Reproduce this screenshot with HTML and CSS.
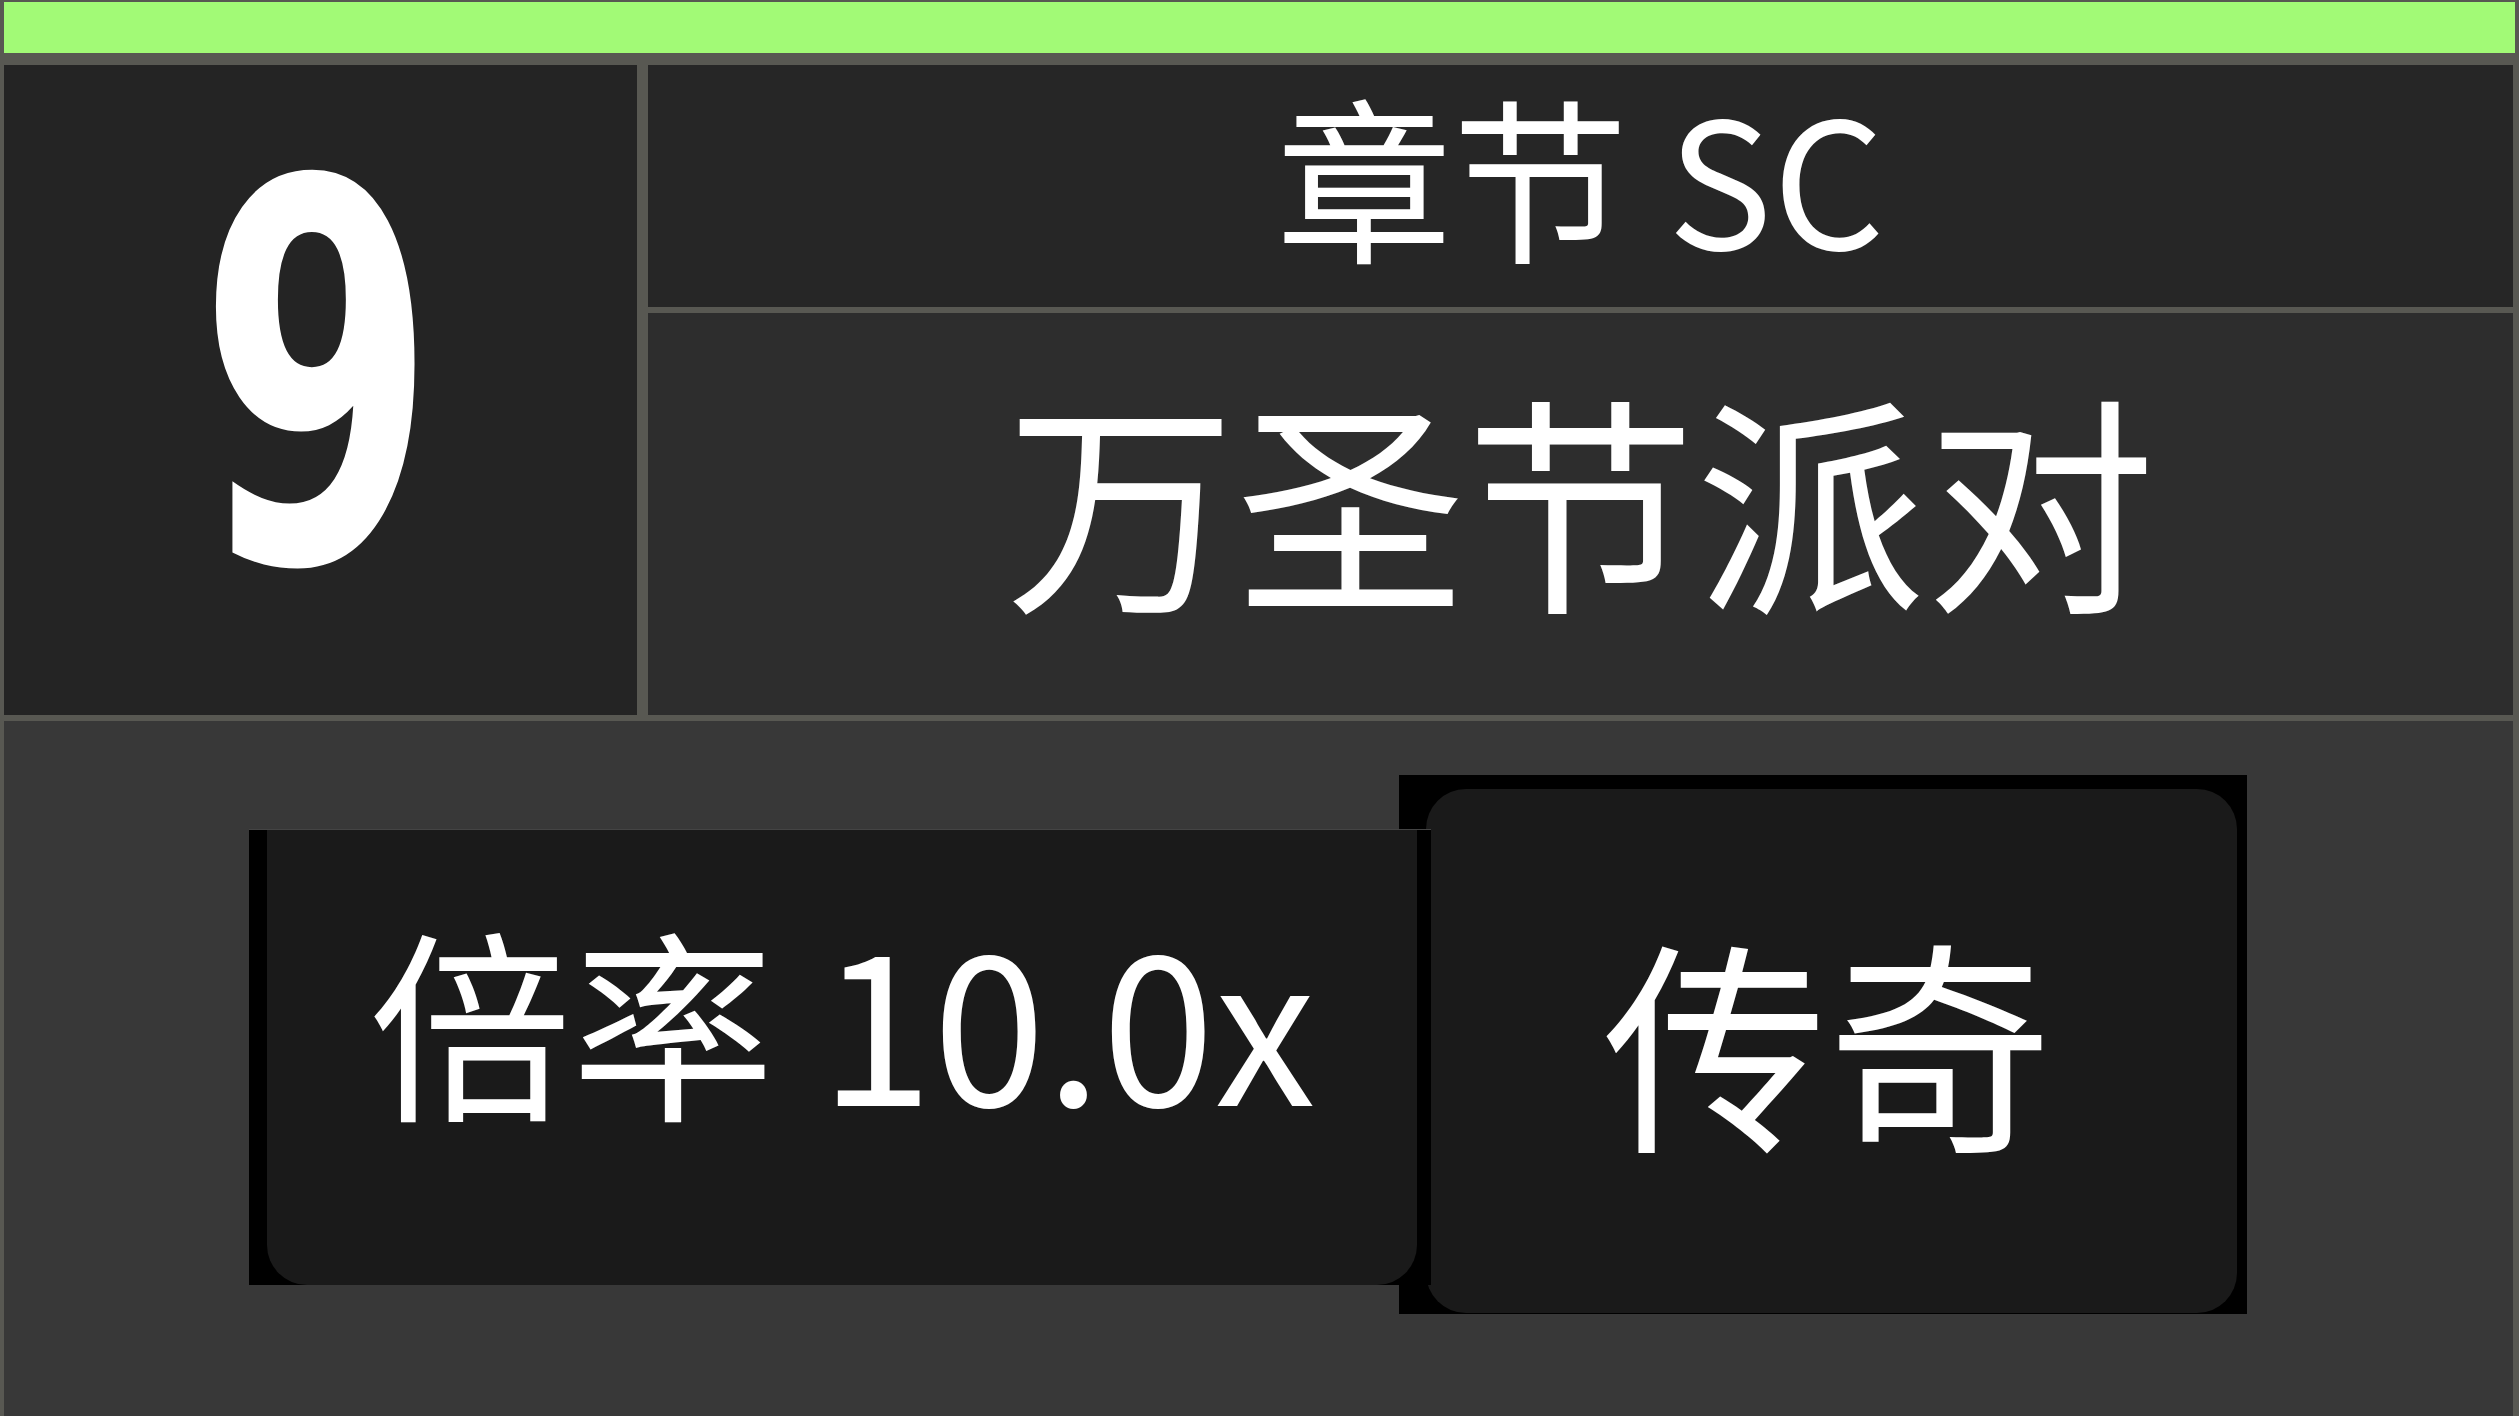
FILE: index.html
```html
<!DOCTYPE html>
<html lang="zh-CN">
<head>
<meta charset="utf-8">
<title>章节卡片</title>
<link rel="stylesheet" href="styles.css">
</head>
<body>
  <div class="bar"></div>
  <div class="top">
    <div class="num"><span class="num-text">9</span></div>
    <div class="right">
      <div class="cell-a"><span class="chapter">章节 SC</span></div>
      <div class="cell-b"><span class="title">万圣节派对</span></div>
    </div>
  </div>
  <div class="bottom">
    <div class="btn btn-rate">
      <div class="btn-inner"><span class="rate-text">倍率 10.0x</span></div>
    </div>
    <div class="btn btn-rank">
      <div class="btn-inner"><span class="rank-text">传奇</span></div>
    </div>
  </div>
</body>
</html>
```

FILE: styles.css
```css
* { box-sizing: border-box; }

html, body {
  margin: 0;
  width: 2519px;
  height: 1416px;
  overflow: hidden;
}

body {
  background: #585852;
  padding: 2px 6px 0 4px;
  display: flex;
  flex-direction: column;
  font-family: "Noto Sans CJK SC", "Noto Sans", sans-serif;
  color: #ffffff;
}

.bar {
  height: 51px;
  margin-right: -2px;
  background: #a2fa76;
  margin-bottom: 12px;
  flex: none;
}

.top {
  height: 650px;
  flex: none;
  display: flex;
  gap: 11px;
}

.num {
  width: 633px;
  background: #242424;
  display: flex;
  align-items: center;
  justify-content: center;
  padding-bottom: 22px;
  padding-right: 6px;
}

.num-text {
  font-family: "DejaVu Sans Condensed", "DejaVu Sans", sans-serif;
  font-weight: 700;
  font-size: 528px;
  line-height: 1;
  display: inline-block;
  transform: scaleX(0.72);
}

.right {
  flex: 1;
  display: flex;
  flex-direction: column;
  gap: 6px;
}

.cell-a {
  height: 242px;
  flex: none;
  background: #262626;
  display: flex;
  align-items: center;
  justify-content: center;
  padding-bottom: 24px;
}

.chapter {
  font-size: 176px;
  line-height: 1;
  white-space: nowrap;
}

.cell-b {
  flex: 1;
  background: #2d2d2d;
  display: flex;
  align-items: center;
  justify-content: center;
  padding-bottom: 38px;
}

.title {
  font-size: 230px;
  line-height: 1;
  white-space: nowrap;
}

.bottom {
  flex: 1;
  margin-top: 6px;
  background: #383838;
  display: flex;
  align-items: flex-start;
  padding-left: 245px;
}

.btn {
  background: #000000;
  overflow: hidden;
  display: flex;
  flex: none;
}

.btn-inner {
  flex: 1;
  background: #1a1a1a;
  border-radius: 40px;
  display: flex;
  align-items: center;
  justify-content: center;
}

.btn-rate {
  position: relative;
  z-index: 1;
  width: 1182px;
  height: 456px;
  margin-top: 108px;
  margin-right: -32px;
  border-top: 1px solid #444444;
}

.btn-rate .btn-inner {
  margin: -60px 14px 0 18px;
  padding-bottom: 20px;
}

.rate-text {
  font-size: 203px;
  line-height: 1;
  white-space: nowrap;
}

.btn-rank {
  width: 848px;
  height: 539px;
  margin-top: 54px;
}

.btn-rank .btn-inner {
  margin: 14px 10px 1px 27px;
  padding-bottom: 28px;
  padding-right: 8px;
}

.rank-text {
  font-size: 225px;
  line-height: 1;
  white-space: nowrap;
}
```
